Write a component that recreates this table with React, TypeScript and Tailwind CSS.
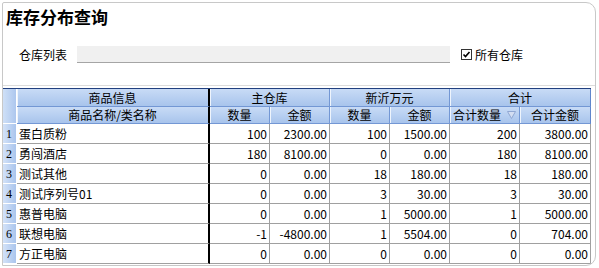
import React from "react";

type Row = {
  name: string;
  q1: string;
  a1: string;
  q2: string;
  a2: string;
  qt: string;
  at: string;
};

const rows: Row[] = [
  { name: "蛋白质粉", q1: "100", a1: "2300.00", q2: "100", a2: "1500.00", qt: "200", at: "3800.00" },
  { name: "勇闯酒店", q1: "180", a1: "8100.00", q2: "0", a2: "0.00", qt: "180", at: "8100.00" },
  { name: "测试其他", q1: "0", a1: "0.00", q2: "18", a2: "180.00", qt: "18", at: "180.00" },
  { name: "测试序列号01", q1: "0", a1: "0.00", q2: "3", a2: "30.00", qt: "3", at: "30.00" },
  { name: "惠普电脑", q1: "0", a1: "0.00", q2: "1", a2: "5000.00", qt: "1", at: "5000.00" },
  { name: "联想电脑", q1: "-1", a1: "-4800.00", q2: "1", a2: "5504.00", qt: "0", at: "704.00" },
  { name: "方正电脑", q1: "0", a1: "0.00", q2: "0", a2: "0.00", qt: "0", at: "0.00" },
];

// header cell look: pale blue bar, white highlight on the left
const head =
  "flex items-center justify-center bg-linear-to-b from-[#c8dbf6] to-[#a8c4ec] border-b border-[#7397d4] border-r border-[#93b2e2] shadow-[inset_1px_0_0_#eef4fc]";
const base = "h-[20px] leading-[19px] bg-white border-b border-[#a0a0a0] whitespace-nowrap";
const num = base + " border-r text-right pr-[2px]";

function SortIcon() {
  return (
    <svg width="9" height="8" viewBox="0 0 9 8" className="ml-[6px]">
      <polygon points="0.5,0.5 8.5,0.5 4.5,7.5" fill="#d3def2" stroke="#8fa7d3" strokeWidth="1" />
    </svg>
  );
}

function App() {
  return (
    <div
      className="w-[599px] h-[268px] bg-white overflow-hidden text-[12px] text-black"
      style={{ fontFamily: '"Noto Sans CJK SC", "Liberation Sans", sans-serif' }}
    >
      <div className="mt-[2px] ml-[2px] w-[594px] h-[264px] border border-[#c8c8c8] rounded-tl-[2px] rounded-tr-[10px] rounded-br-[10px] overflow-hidden flex flex-col">
        {/* title + filter */}
        <div className="h-[83px] border-b border-[#dcdcdc] shrink-0">
          <div className="pl-[3px] mt-[4px] h-[20px] leading-[20px] text-[17px] font-bold">库存分布查询</div>
          <div className="flex items-center h-[17px] mt-[19px] pl-[16px]">
            <span className="w-[48px] leading-[17px]">仓库列表</span>
            <div className="ml-[10px] w-[373px] h-[17px] bg-[#f0f0f0] border-b border-[#a5a5a5]"></div>
            <div className="ml-[11px] w-[11px] h-[11px] border border-[#333] bg-white flex items-center justify-center">
              <svg width="9" height="9" viewBox="0 0 9 9">
                <path d="M1.5 4.5 L3.5 6.5 L7.5 2" fill="none" stroke="#000" strokeWidth="1.6" />
              </svg>
            </div>
            <span className="ml-[3px] leading-[17px]">所有仓库</span>
          </div>
        </div>

        {/* grid */}
        <div className="mt-[2px] w-[588px] border-t border-[#22407f]">
          <div className="grid grid-cols-[14px_193px_60px_60px_60px_60px_70px_71px]">
            <div className="row-span-2 bg-linear-to-r from-[#cfe0f7] to-[#adc7ee] border-b border-[#7397d4] border-r border-white"></div>
            <div className={head + " h-[18px] border-r-2 border-r-black"}>商品信息</div>
            <div className={head + " col-span-2 h-[18px]"}>主仓库</div>
            <div className={head + " col-span-2 h-[18px]"}>新沂万元</div>
            <div className={head + " col-span-2 h-[18px] border-r-[#5f86cc]"}>合计</div>

            <div className={head + " h-[17px] border-r-2 border-r-black"}>商品名称/类名称</div>
            <div className={head + " h-[17px]"}>数量</div>
            <div className={head + " h-[17px]"}>金额</div>
            <div className={head + " h-[17px]"}>数量</div>
            <div className={head + " h-[17px]"}>金额</div>
            <div className={head + " h-[17px]"}>
              合计数量
              <SortIcon />
            </div>
            <div className={head + " h-[17px] border-r-[#5f86cc]"}>合计金额</div>

            {rows.map((r, i) => (
              <React.Fragment key={i}>
                <div
                  className="h-[20px] leading-[21px] pl-[3px] text-[12px] bg-linear-to-r from-[#d3e2f8] to-[#aac5ed] border-b border-[#e3ebf8] border-r border-white"
                  style={{ fontFamily: '"Liberation Serif", serif' }}
                >
                  {i + 1}
                </div>
                <div className={base + " text-left pl-[2px] border-r-2 border-r-black"}>{r.name}</div>
                <div className={num}>{r.q1}</div>
                <div className={num}>{r.a1}</div>
                <div className={num}>{r.q2}</div>
                <div className={num}>{r.a2}</div>
                <div className={num}>{r.qt}</div>
                <div className={num}>{r.at}</div>
              </React.Fragment>
            ))}
          </div>
        </div>
      </div>
    </div>
  );
}

export default App;
